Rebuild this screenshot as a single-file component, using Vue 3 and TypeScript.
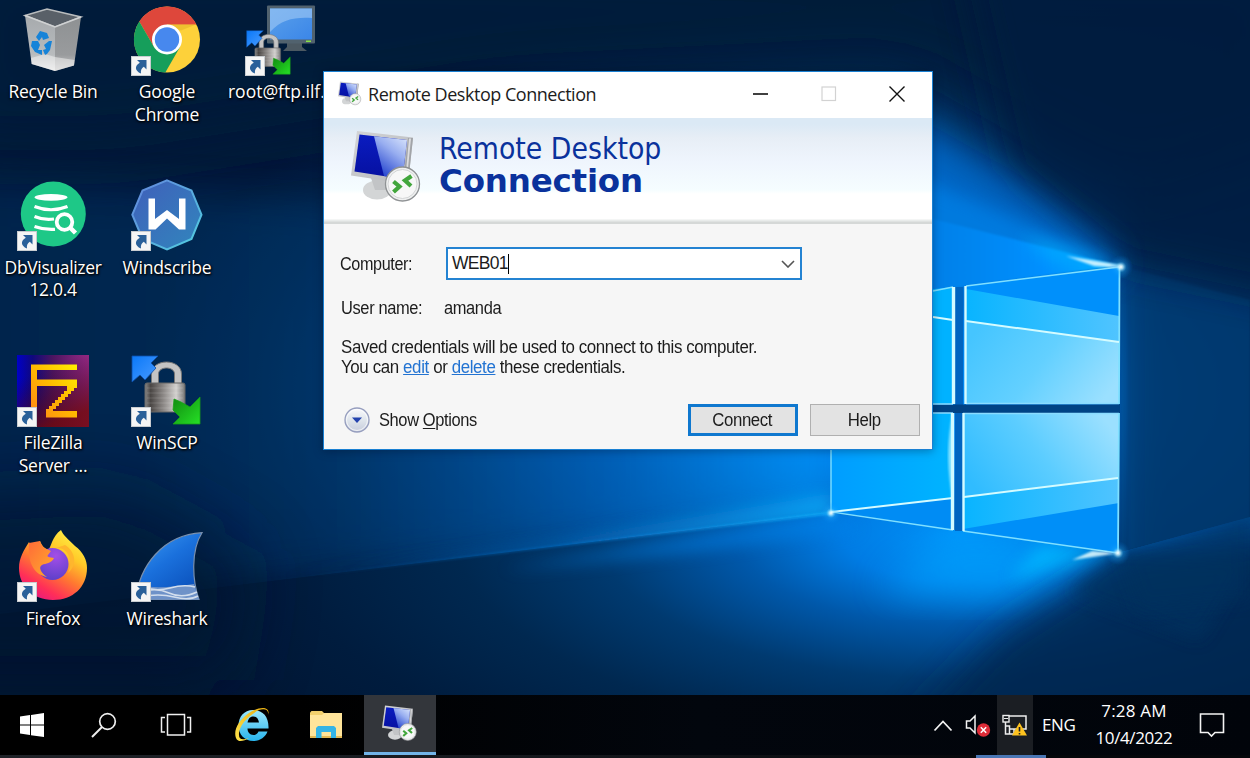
<script setup lang="ts">
import { ref } from 'vue'

interface Shortcut {
  id: string
  lines: string[]
  linked: boolean
}

const shortcuts: Shortcut[] = [
  { id: 'bin', lines: ['Recycle Bin'], linked: false },
  { id: 'dbvis', lines: ['DbVisualizer', '12.0.4'], linked: true },
  { id: 'filezilla', lines: ['FileZilla', 'Server ...'], linked: true },
  { id: 'firefox', lines: ['Firefox'], linked: true },
  { id: 'chrome', lines: ['Google', 'Chrome'], linked: true },
  { id: 'windscribe', lines: ['Windscribe'], linked: true },
  { id: 'winscp', lines: ['WinSCP'], linked: true },
  { id: 'wireshark', lines: ['Wireshark'], linked: true },
  { id: 'ftp', lines: ['root@ftp.ilf...'], linked: true },
]

const computer = ref('WEB01')
const userName = ref('amanda')
</script>

<template>
  <div class="screen">
    <svg class="wallpaper" viewBox="0 0 1250 758" aria-hidden="true">
      <defs>
        <radialGradient id="base" gradientUnits="userSpaceOnUse" cx="0" cy="0" r="1" gradientTransform="translate(900 390) scale(760 400)">
          <stop offset="0" stop-color="#0090fa" />
          <stop offset=".2" stop-color="#007de6" />
          <stop offset=".4" stop-color="#0058a8" />
          <stop offset=".62" stop-color="#003a72" />
          <stop offset=".85" stop-color="#002249" />
          <stop offset="1" stop-color="#001838" />
        </radialGradient>
        <radialGradient id="floor" gradientUnits="userSpaceOnUse" cx="0" cy="0" r="1" gradientTransform="translate(960 535) scale(900 360)">
          <stop offset="0" stop-color="#0092f8" />
          <stop offset=".13" stop-color="#007ce4" />
          <stop offset=".25" stop-color="#0058aa" />
          <stop offset=".4" stop-color="#003a70" />
          <stop offset=".56" stop-color="#002850" />
          <stop offset=".75" stop-color="#001c3e" />
          <stop offset="1" stop-color="#001430" />
        </radialGradient>
        <linearGradient id="leftFade" x1="0" x2="1" y1="0" y2="0">
          <stop offset="0" stop-color="#003566" stop-opacity=".75" />
          <stop offset=".45" stop-color="#00407a" stop-opacity=".8" />
          <stop offset=".75" stop-color="#006acc" stop-opacity=".8" />
          <stop offset="1" stop-color="#009cff" />
        </linearGradient>
        <linearGradient id="rayLine" x1="0" x2="1" y1="0" y2="0">
          <stop offset="0" stop-color="#0a5ca8" stop-opacity="0" />
          <stop offset=".5" stop-color="#0874cc" stop-opacity=".7" />
          <stop offset="1" stop-color="#12b4ff" />
        </linearGradient>
        <linearGradient id="paneTop" x1="0" x2="1" y1=".3" y2=".7">
          <stop offset="0" stop-color="#45c5ff" />
          <stop offset=".5" stop-color="#63d0ff" />
          <stop offset="1" stop-color="#9be0ff" />
        </linearGradient>
        <linearGradient id="paneBottom" x1="0" x2="1" y1=".7" y2=".3">
          <stop offset="0" stop-color="#30bcff" />
          <stop offset=".5" stop-color="#5ccdff" />
          <stop offset="1" stop-color="#9be0ff" />
        </linearGradient>
        <linearGradient id="paneLeft" x1="0" x2="1" y1="0" y2="0">
          <stop offset="0" stop-color="#009dff" />
          <stop offset="1" stop-color="#00b4ff" />
        </linearGradient>
        <linearGradient id="band" x1="0" x2="1" y1="0" y2="0">
          <stop offset="0" stop-color="#08b4ff" />
          <stop offset="1" stop-color="#50c4ff" />
        </linearGradient>
        <linearGradient id="upperGlow" x1="0" x2="1" y1="0" y2="0">
          <stop offset="0" stop-color="#0080e8" />
          <stop offset=".6" stop-color="#0090ff" />
          <stop offset="1" stop-color="#00b0ff" />
        </linearGradient>
        <radialGradient id="spark">
          <stop offset="0" stop-color="#fff" />
          <stop offset=".18" stop-color="#bff0ff" stop-opacity=".8" />
          <stop offset=".45" stop-color="#28b4ff" stop-opacity=".3" />
          <stop offset="1" stop-color="#0088ff" stop-opacity="0" />
        </radialGradient>
        <clipPath id="aboveRay"><path d="M0 0H1250V513H831L0 614Z" /></clipPath>
        <clipPath id="belowRayArea"><path d="M0 614 831 513 963 531 1118 553 1250 517V758H0Z" /></clipPath>
        <filter id="soft2"><feGaussianBlur stdDeviation="1.2" /></filter>
        <filter id="soft8" x="-20%" y="-50%" width="140%" height="200%"><feGaussianBlur stdDeviation="8" /></filter>
        <filter id="soft18" x="-30%" y="-30%" width="160%" height="160%"><feGaussianBlur stdDeviation="18" /></filter>
        <filter id="soft40" x="-40%" y="-40%" width="180%" height="180%"><feGaussianBlur stdDeviation="36" /></filter>
      </defs>
      <rect width="1250" height="758" fill="url(#base)" />
      <path d="M1122 180 1330 60V760H1122Z" fill="#00284f" opacity=".75" filter="url(#soft18)" />
      <path d="M1128 268 1250 300V525L1128 550Z" fill="#00427e" opacity=".5" filter="url(#soft2)" />
      <path d="M-60 -60H1310V130L1130 200 900 70 500 90 120 150-60 150Z" fill="#001a3a" opacity=".85" filter="url(#soft40)" />
      <path d="M1120 262 1300 300V-50H960L1010 170Z" fill="#001f41" opacity=".8" filter="url(#soft18)" />
      <g clip-path="url(#aboveRay)">
        <path d="M-60 180 320 200 830 360V512L-60 618Z" fill="url(#leftFade)" opacity=".55" filter="url(#soft18)" />
        <path d="M250 581 560 540 831 494V516L600 548Z" fill="url(#rayLine)" filter="url(#soft8)" opacity=".7" />
      </g>
      <g clip-path="url(#belowRayArea)">
        <rect y="500" width="1250" height="258" fill="url(#floor)" />
        <path d="M500 570 831 513 860 530 700 550Z" fill="#0083ea" opacity=".6" filter="url(#soft8)" />
        <path d="M1118 550 950 535 880 590 1010 600Z" fill="#00a4ff" opacity=".65" filter="url(#soft18)" />
        <path d="M1118 552 1040 545 1010 580Z" fill="#00b8ff" opacity=".8" filter="url(#soft8)" />
        <path d="M1124 555 1000 634 880 758H1310V530Z" fill="#00264f" opacity=".85" filter="url(#soft18)" />
        <path d="M1119 553 1070 592 1200 640 1250 560Z" fill="#00305e" opacity=".7" filter="url(#soft8)" />
        <path d="M1119 553 1250 517V600L1140 610Z" fill="#00305e" opacity=".5" filter="url(#soft8)" />
      </g>
      <path d="M-90 500 120 490 250 560 230 680H-90Z" fill="#001430" opacity=".75" filter="url(#soft40)" />
      <path d="M300 576 831 511.500V514.500L300 578Z" fill="url(#rayLine)" opacity=".7" filter="url(#soft2)" />
      <path d="M1120 266 900 105 860 220 900 300Z" fill="#006ccf" opacity=".85" filter="url(#soft18)" />
      <path d="M1120 266 900 170V300Z" fill="#0086ee" opacity=".6" filter="url(#soft8)" />
      <path d="M1120 266 933 219V292L966 286Z" fill="url(#upperGlow)" filter="url(#soft2)" />
      <path d="M1120 266 1020 236 1050 258Z" fill="#00b4ff" opacity=".8" filter="url(#soft8)" />

      <path d="M832 300 953 287V404H832Z" fill="#00b2ff" />
      <path d="M966 286 1119 267V404H965Z" fill="#0090fb" />
      <path d="M966 289 1119 316V404H965Z" fill="url(#band)" />
      <path d="M966 321 1119 342V404H965Z" fill="url(#paneTop)" />
      <path d="M831 413H953V530L831 512Z" fill="#008cf4" />
      <path d="M831 413H953V498L831 512Z" fill="url(#paneLeft)" />
      <path d="M963 413H1119V553L963 531Z" fill="#008ff8" />
      <path d="M963 413H1119V503L963 529Z" fill="url(#band)" />
      <path d="M963 413H1119V478L963 497Z" fill="url(#paneBottom)" />
      <path d="M955 287H963V531H955Z" fill="#0064c0" />
      <path d="M831 404.5H1120V413H831Z" fill="#004385" />
      <g fill="none" stroke="#7fe0ff" stroke-width="1.4">
        <path d="M933 291 953 287M966 286 1119 267M831 450V512L953 530M963 531 1118 553" />
        <path d="M966 403.5H1119M963 413.5H1119M933 404H953M933 413H953" stroke="#8adcff" />
        <path d="M1119.500 267 1119 404M1119 413 1118 553" stroke-width="1.8" />
      </g>
      <g fill="none" stroke="#d4fbff" stroke-width="2.4">
        <path d="M953.500 287V404M952.500 413V530" stroke-width="3.4" />
        <path d="M965.500 286V404M963.500 413V531" />
        <path d="M933 317 953 320M966 321 1119 342M831 512 953 498M964 497 1118 478" stroke-width="2" />
      </g>
      <path d="M952 414C947 445 947 465 952 498Z" fill="#bff6ff" opacity=".7" filter="url(#soft2)" />
      <path d="M1121 265 1066 256 1094 266 1121 268ZM1120 553 1072 560 1092 551Z" fill="#e6fcff" opacity=".85" filter="url(#soft2)" />
      <circle cx="1121" cy="267" r="12" fill="url(#spark)" />
      <circle cx="1118" cy="553" r="12" fill="url(#spark)" />
      <circle cx="831" cy="513" r="11" fill="url(#spark)" />
    </svg>

    <!-- reusable artwork -->
    <svg class="defs" width="0" height="0" aria-hidden="true">
      <defs>
        <linearGradient id="rdScreen" x1="0" x2="0" y1="0" y2="1">
          <stop offset="0" stop-color="#0a1cc0" /><stop offset="1" stop-color="#0610a0" />
        </linearGradient>
        <linearGradient id="rdShade" x1=".9" x2=".3" y1="0" y2="1">
          <stop offset="0" stop-color="#d6e2fb" /><stop offset=".4" stop-color="#98aef0" /><stop offset="1" stop-color="#1c3ccc" />
        </linearGradient>
        <linearGradient id="rdFrame" x1="0" x2="1" y1="0" y2="1">
          <stop offset="0" stop-color="#d4d5d7" /><stop offset="1" stop-color="#b4b6ba" />
        </linearGradient>
        <linearGradient id="metal" x1="0" x2="1" y1="0" y2="0">
          <stop offset="0" stop-color="#888" /><stop offset=".14" stop-color="#4a4644" /><stop offset=".45" stop-color="#8a8684" />
          <stop offset=".78" stop-color="#d2d0ce" /><stop offset="1" stop-color="#777" />
        </linearGradient>
        <linearGradient id="blueArrow" x1="0" x2="1" y1="0" y2="1">
          <stop offset="0" stop-color="#0a78f8" /><stop offset="1" stop-color="#4a9cff" />
        </linearGradient>
        <linearGradient id="greenArrow" x1="0" x2="1" y1="0" y2="1">
          <stop offset="0" stop-color="#108a10" /><stop offset="1" stop-color="#26e026" />
        </linearGradient>
        <linearGradient id="monitor" x1="0" x2="1" y1="0" y2="1">
          <stop offset="0" stop-color="#5aa0ea" /><stop offset="1" stop-color="#3b86e8" />
        </linearGradient>
        <linearGradient id="binL" x1="0" x2="0" y1="0" y2="1">
          <stop offset="0" stop-color="#a6aaad" /><stop offset=".7" stop-color="#b8bbbd" /><stop offset="1" stop-color="#f0f0f0" />
        </linearGradient>
        <linearGradient id="binR" x1="0" x2="0" y1="0" y2="1">
          <stop offset="0" stop-color="#8e9193" /><stop offset=".7" stop-color="#999b9d" /><stop offset="1" stop-color="#d2d2d2" />
        </linearGradient>
        <linearGradient id="windFill" x1="0" x2="1" y1="0" y2="1">
          <stop offset="0" stop-color="#405fba" /><stop offset="1" stop-color="#3186bd" />
        </linearGradient>
        <linearGradient id="windEdge" x1="0" x2="1" y1="0" y2="1">
          <stop offset="0" stop-color="#6383dc" /><stop offset="1" stop-color="#50d0e0" />
        </linearGradient>
        <linearGradient id="fzBack" x1="0" x2="1" y1="0" y2="0">
          <stop offset="0" stop-color="#0000c8" /><stop offset=".22" stop-color="#10087c" /><stop offset=".5" stop-color="#4c1560" /><stop offset="1" stop-color="#982a86" />
        </linearGradient>
        <linearGradient id="fzDark" x1="0" x2=".4" y1="0" y2="1">
          <stop offset=".3" stop-color="#300020" stop-opacity="0" /><stop offset="1" stop-color="#700808" stop-opacity=".8" />
        </linearGradient>
        <linearGradient id="fzText" x1="1" x2="0" y1="0" y2="1">
          <stop offset="0" stop-color="#fff000" /><stop offset=".5" stop-color="#ffb800" /><stop offset="1" stop-color="#ff8418" />
        </linearGradient>
        <linearGradient id="foxFlame" x1=".8" x2=".2" y1="0" y2="1">
          <stop offset="0" stop-color="#fff44a" /><stop offset=".3" stop-color="#ffca28" /><stop offset=".55" stop-color="#ff7a30" /><stop offset=".8" stop-color="#ff2e58" /><stop offset="1" stop-color="#e31587" />
        </linearGradient>
        <linearGradient id="foxHead" x1="0" x2="1" y1="0" y2="1">
          <stop offset="0" stop-color="#ff6b38" /><stop offset="1" stop-color="#ffad2c" />
        </linearGradient>
        <radialGradient id="foxGlobe" cx=".6" cy=".25" r=".8">
          <stop offset="0" stop-color="#a34ee8" /><stop offset="1" stop-color="#5a3fc8" />
        </radialGradient>
        <linearGradient id="shark" x1="0" x2=".7" y1="0" y2="1">
          <stop offset="0" stop-color="#3c9cf4" /><stop offset=".5" stop-color="#1a70dc" /><stop offset="1" stop-color="#0a50ba" />
        </linearGradient>
        <linearGradient id="ieBlue" x1="0" x2="0" y1="0" y2="1">
          <stop offset="0" stop-color="#9ce8fc" /><stop offset="1" stop-color="#28b4ec" />
        </linearGradient>
        <linearGradient id="ieGold" x1="0" x2="1" y1="1" y2="0">
          <stop offset="0" stop-color="#ffe24a" /><stop offset="1" stop-color="#e8ae10" />
        </linearGradient>
        <g id="rdIcon">
          <ellipse cx="26" cy="60" rx="14" ry="9.500" fill="#d3d5d6" />
          <path d="M20 48H38L38 60H24Z" fill="#c2c4c6" />
          <path d="M6 1 62 7.500 57 54 0 45.500Z" fill="url(#rdFrame)" />
          <path d="M57 8 62 8 57 54 52 53Z" fill="#a2a4a8" />
          <path d="M58 8.500 60 8.500 55.500 53 54 53Z" fill="#dcdddf" />
          <path d="M8.500 4.500 56 10 51.500 49 3.500 41.500Z" fill="url(#rdScreen)" />
          <path d="M23 6.200 56 10 51.500 49 33 46.100Z" fill="url(#rdShade)" />
          <circle cx="51.500" cy="54" r="17" fill="#eff0f0" stroke="#8f9294" stroke-width="1.300" />
          <circle cx="51.500" cy="54" r="14.500" fill="#f7f7f7" stroke="#d3d5d6" stroke-width="1" />
          <path d="M42.500 51.500 48.500 56.500 42.500 62M60.500 46 54 50.500 60 56" fill="none" stroke="#42a63c" stroke-width="4.200" />
        </g>
        <g id="lock">
          <path d="M20.500 29V19C20.500 3 50.500 3 50.500 19V29H43.500V19C43.500 11 27.500 11 27.500 19V29Z" fill="#c4c4c4" stroke="#777" stroke-width="1" />
          <rect x="14" y="28" width="40" height="29" rx="2" fill="url(#metal)" stroke="#666" />
          <path d="M16 33H52M16 38H52M16 43H52M16 48H52M16 53H52" stroke="#fff" stroke-opacity=".14" />
          <path d="M1 1H27L20 8 25 13 14 25 9 20 1 27Z" fill="url(#blueArrow)" stroke="#0c4ea8" stroke-width=".8" />
          <path d="M69 69H42L49 62 42 55 43 44 50 47 59 52 69 42Z" fill="url(#greenArrow)" stroke="#16a016" stroke-width=".8" />
        </g>
      </defs>
    </svg>

    <div class="desktop">
      <div v-for="item in shortcuts" :key="item.id" class="shortcut">
        <svg class="icon" viewBox="0 0 72 72">
          <g v-if="item.id === 'bin'">
            <path d="M8 11.500 30 5 64 13 38 23Z" fill="#596068" stroke="#b9bcbe" stroke-width="1.500" />
            <path d="M8 11.500 38 23V67L14.700 60Z" fill="url(#binL)" />
            <path d="M38 23 64 13 57 61.500 38 67Z" fill="url(#binR)" />
            <path d="M14.200 54 28 50 38 53 57.500 56 57 61.500 38 67 14.700 60Z" fill="#eee" opacity=".55" />
            <path d="M8 11.500 38 23 64 13" fill="none" stroke="#cfd1d2" stroke-width="1.600" />
            <g fill="#1683d8"><path d="M19 33 23 27 30 29 32 34 26 36 25 33 22 37Z" /><path d="M15 37 21 37 23 41 21 46 25 46V51L18 48 14 42Z" /><path d="M35 37 33 46 30 50 28 51 26 46 29 45 27 41 32 37Z" /></g>
          </g>
          <g v-else-if="item.id === 'chrome'" transform="translate(36 35.500)">
            <circle r="33" fill="#fdd13a" />
            <path d="M29.400 -15H0V0L-13 7.500-27.700-18A33 33 0 0 1 29.400-15Z" fill="#de473b" />
            <path d="M-27.700-18-13 7.500 0 0 13 7.500-1.700 33A33 33 0 0 1-27.700-18Z" fill="#169e5b" />
            <path d="M0-15H29L14-9Z" fill="#d8a820" opacity=".4" />
            <circle r="15" fill="#fff" /><circle r="12.200" fill="#4788ee" />
          </g>
          <g v-else-if="item.id === 'ftp'">
            <path d="M42 38H57V43L62 47H38L42 43Z" fill="#4c5962" />
            <rect x="22" y="1.500" width="48" height="38" rx="1" fill="#51626e" />
            <rect x="25" y="4.500" width="42" height="31" fill="url(#monitor)" />
            <path d="M25 28C37 15 50 13 67 14V4.500H25Z" fill="#9ac4f5" opacity=".65" />
            <rect x="61" y="36.500" width="5" height="1.500" fill="#88e048" />
            <g transform="translate(1 26) scale(.64)"><use href="#lock" /></g>
          </g>
          <g v-else-if="item.id === 'dbvis'">
            <circle cx="36.300" cy="35" r="32.500" fill="#1ec887" />
            <ellipse cx="34" cy="18.300" rx="16.500" ry="3.400" fill="#fff" />
            <g fill="none" stroke="#fff" stroke-width="3.200"><path d="M17.500 27.500Q34 34 50.500 27.500M17.500 37.500Q27 41.500 37 40M17.500 47.500Q27 51 38 50.300" /></g>
            <circle cx="47.500" cy="43" r="7.800" fill="none" stroke="#fff" stroke-width="3.800" /><path d="M53 48.500 58.500 54" stroke="#fff" stroke-width="4.500" />
          </g>
          <g v-else-if="item.id === 'windscribe'">
            <path d="M36 1.300 60.500 11.500 70.500 35.700 60.500 60 36 70.300 11.500 60 1.300 35.700 11.500 11.500Z" fill="url(#windFill)" stroke="url(#windEdge)" stroke-width="2" />
            <path d="M17.500 19.500H24V40L36 31 48 40V19.500H54.500V50.500H48L36 39.500 24.500 50.500H17.500Z" fill="#fff" />
          </g>
          <g v-else-if="item.id === 'filezilla'">
            <rect width="72" height="72" fill="url(#fzBack)" /><rect width="72" height="72" fill="url(#fzDark)" />
            <path d="M14 9.500H60V15H20V24.500H60V33H57V36H54V39H51V42H48V45H45V48H42V51H39V54H36V56H60V62.500H29V54H32V51H35V48H38V45H41V42H44V39H47V36H50V31H20V62H14Z" fill="url(#fzText)" />
          </g>
          <g v-else-if="item.id === 'firefox'">
            <path d="M44 0C46 5 51 9 58 16 66 22 70 30 70 38 70 57 56 70 36 70 16 70 2 56 2 38 2 28 7 20 12 12L15 18 23 11C25 16 27 18 31 20 34 18 35 6 44 0Z" fill="url(#foxFlame)" />
            <circle cx="35.500" cy="34" r="16" fill="url(#foxGlobe)" />
            <path d="M12 13 23 11C25 18 30 19 34 21L31 25C29 27 33 27 37 28 34 34 29 33 25 35 21 37 24 43 30 47 19 45 10 35 12 13Z" fill="url(#foxHead)" />
            <path d="M39 18C51 17 57 31 51 43 62 34 57 20 48 15Z" fill="#ffb62d" />
          </g>
          <g v-else-if="item.id === 'winscp'"><use href="#lock" /></g>
          <g v-else>
            <path d="M71 2.700C60 20 61 50 68 69.500H5C8 37 31 5 71 2.700Z" fill="url(#shark)" stroke="#7990ae" stroke-width="1.200" />
            <path d="M10 55C20 59 44 57 63 54L68 69.500H7Z" fill="#6e92c8" />
            <path d="M12 57Q25 62 39 58T64 57M10 62Q25 57 38 63T66 62M9 67Q28 63 43 67T67 66" fill="none" stroke="#d2deed" stroke-width="1.600" />
          </g>
          <g v-if="item.linked">
            <rect x=".500" y="52.500" width="19" height="19" fill="#f5f5f5" stroke="#c8ccd0" />
            <path d="M6 56H15.500V65.500L12.800 62.800C10.500 64.500 9.500 66.500 10 69.500 3.500 67 3.500 61.500 8.800 58.800Z" fill="#2a6099" />
          </g>
        </svg>
        <div class="label" :class="item.id"><span v-for="line in item.lines" :key="line">{{ line }}</span></div>
      </div>
    </div>

    <section class="dialog">
      <header class="titlebar">
        <svg class="mini" viewBox="0 0 72 74"><use href="#rdIcon" /></svg>
        <span class="title">Remote Desktop Connection</span>
        <div class="controls">
          <svg viewBox="0 0 16 16"><path d="M0 8H15" stroke="#111" stroke-width="1.600" /></svg>
          <svg viewBox="0 0 16 16"><rect x="1" y="1" width="13.500" height="13.500" fill="none" stroke="#d2d2d2" stroke-width="1.200" /></svg>
          <svg viewBox="0 0 16 16"><path d="M.5.500 15.500 15.500M15.500.500.500 15.500" stroke="#111" stroke-width="1.400" /></svg>
        </div>
      </header>
      <div class="banner">
        <svg class="logo" viewBox="0 0 72 74"><use href="#rdIcon" /></svg>
        <div class="heading">
          <span class="h-light">Remote Desktop</span>
          <strong class="h-bold">Connection</strong>
        </div>
      </div>
      <div class="body">
        <div class="row computer">
          <span class="key"><span class="narrow tight">Computer:</span></span>
          <div class="combo">
            <span class="value">{{ computer }}</span><i class="caret"></i>
            <svg class="chev" viewBox="0 0 14 8"><path d="M1 1 7 7 13 1" fill="none" stroke="#555" stroke-width="1.600" /></svg>
          </div>
        </div>
        <div class="row user"><span class="key"><span class="narrow">User name:</span></span><span class="narrow who">{{ userName }}</span></div>
        <div class="note">
          <span>Saved credentials will be used to connect to this computer.</span>
          <span>You can <a>edit</a> or <a>delete</a> these credentials.</span>
        </div>
        <div class="footer">
          <svg class="expander" viewBox="0 0 26 26">
            <defs><linearGradient id="knob" x1="0" x2="0" y1="0" y2="1"><stop offset="0" stop-color="#fafafd" /><stop offset=".5" stop-color="#dfe5ec" /><stop offset="1" stop-color="#c6ccdc" /></linearGradient></defs>
            <circle cx="13" cy="13" r="12" fill="url(#knob)" stroke="#969ebe" stroke-width="1.300" />
            <circle cx="13" cy="13" r="10.500" fill="none" stroke="#fff" stroke-opacity=".7" />
            <path d="M8 10.500H18L13 16Z" fill="#2443ae" />
          </svg>
          <span class="options narrow">Show <u>O</u>ptions</span>
          <button class="btn primary"><span>Connect</span></button>
          <button class="btn"><span>Help</span></button>
        </div>
      </div>
    </section>

    <nav class="taskbar">
      <div class="slot"><svg width="26" height="26" viewBox="0 0 26 26"><path d="M1 4.500 11 3V12.500H1ZM12 2.900 25 1V12.500H12ZM1 13.500H11V23L1 21.500ZM12 13.500H25V25L12 23.200Z" fill="#fff" /></svg></div>
      <div class="slot search"><svg width="26" height="26" viewBox="0 0 26 26"><circle cx="16.500" cy="9.500" r="7.800" fill="none" stroke="#eee" stroke-width="1.700" /><path d="M11 15 1 25" stroke="#eee" stroke-width="2" /></svg></div>
      <div class="slot"><svg width="32" height="24" viewBox="0 0 32 24"><g fill="none" stroke="#f0f0f0" stroke-width="1.500"><path d="M7.500 1.500H24.500V22H7.500ZM5 4.500H1.500V19H5M27 4.500H30.500V19H27" /></g></svg></div>
      <div class="slot ie"><svg width="36" height="36" viewBox="0 0 36 36">
        <path d="M19 3C10 3 4.500 10 4.500 18.500S10 34 19.500 34C26 34 31.500 30 33.500 24.500H24.500C23.500 27 21.500 28 19.500 28 15.500 28 13.500 25 13.500 21.500H34.500C35 10 29 3 19 3ZM13.500 15.500C14.500 11 16.500 9.500 19.500 9.500S24.500 12 25 15.500Z" fill="url(#ieBlue)" />
        <path d="M34 8C37 0 27-2 15 6 5 13-1 23 2 31 4 36 10 34 15 31 9 33 5 33 5 28 4 19 15 8 25 3 31 1 35 3 34 8Z" fill="url(#ieGold)" />
      </svg></div>
      <div class="slot files"><svg width="34" height="30" viewBox="0 0 34 30">
        <path d="M1 2.500 2.500 1H13L15 3V28H1Z" fill="#f2cf6c" /><path d="M1 5H13L15 3H33V28H1Z" fill="#ffe49a" /><path d="M1 26H33V28H1Z" fill="#e2b854" />
        <path d="M7 28V18L9 16H25L27 18V28H22V22H12.500V28Z" fill="#35b4e6" />
      </svg></div>
      <div class="slot active"><svg width="36" height="37" viewBox="0 0 72 74"><use href="#rdIcon" /></svg></div>
      <div class="tray">
        <svg class="up" width="20" height="13" viewBox="0 0 20 13"><path d="M1.500 11.500 10 2.500 18.500 11.500" fill="none" stroke="#f2f2f2" stroke-width="1.800" /></svg>
        <svg class="vol" width="26" height="24" viewBox="0 0 26 24"><path d="M1.500 8H5L10 3V20L5 15H1.500Z" fill="none" stroke="#f4f4f4" stroke-width="1.500" /><circle cx="18.500" cy="17" r="6.700" fill="#de2c38" /><path d="M15.800 14.300 21.200 19.700M21.200 14.300 15.800 19.700" stroke="#fff" stroke-width="1.500" /></svg>
        <div class="net"><svg width="28" height="24" viewBox="0 0 28 24">
          <path d="M8 3H25V16H8M4.500 8V21H8M5 13H8.500V21H17M13 16V20" fill="none" stroke="#eee" stroke-width="1.500" /><rect x="2" y="2.500" width="6" height="6.500" fill="#15181c" stroke="#eee" stroke-width="1.400" /><path d="M3 5.500H7" stroke="#eee" />
          <path d="M18.500 9.500 26 22.500H11Z" fill="#ffc31f" /><path d="M18.500 14V18.500M18.500 20V21.500" stroke="#222" stroke-width="1.600" />
        </svg></div>
        <span class="lang">ENG</span>
        <div class="clock"><span class="time">7:28 AM</span><span>10/4/2022</span></div>
        <svg class="bell" width="26" height="26" viewBox="0 0 26 26"><path d="M1.500 2H24.500V20.500H16L12.500 24 9 20.500H1.500Z" fill="none" stroke="#f4f4f4" stroke-width="1.600" /></svg>
      </div>
    </nav>
    <div class="edge"><i></i></div>
  </div>
</template>

<style>
html,
body {
  margin: 0;
  overflow: hidden;
  background: #001838;
}
</style>

<style scoped>
.screen {
  position: relative;
  width: 1250px;
  height: 758px;
  overflow: hidden;
  display: flex;
  flex-direction: column;
  font-family: 'Open Sans', 'Noto Sans', sans-serif;
  color: #fff;
}
.wallpaper {
  position: absolute;
  inset: 0;
  width: 1250px;
  height: 758px;
}
.defs {
  position: absolute;
}
.desktop {
  position: relative;
  height: 691.5px;
  margin: 3.5px 0 0 -4px;
  display: grid;
  grid-auto-flow: column;
  grid-template-rows: repeat(4, 175.5px);
  grid-auto-columns: 114px;
  flex: none;
}
.shortcut {
  display: flex;
  flex-direction: column;
  align-items: center;
}
.icon {
  width: 72px;
  height: 72px;
  flex: none;
}
.label {
  margin-top: 4.8px;
  display: flex;
  flex-direction: column;
  align-items: center;
  font-size: 17.5px;
  line-height: 22.5px;
  letter-spacing: -0.2px;
  white-space: nowrap;
  text-shadow: 1px 1px 2px #000, 0 1px 3px #000;
}
.label.dbvis {
  letter-spacing: -0.35px;
}
.label.ftp {
  letter-spacing: 0;
}
.dialog {
  position: absolute;
  left: 323px;
  top: 71px;
  width: 610px;
  height: 379px;
  box-sizing: border-box;
  border: 1px solid #1a80d2;
  background: #f6f6f6;
  color: #1c1c1c;
  display: flex;
  flex-direction: column;
  box-shadow: 0 1px 9px rgba(0, 10, 30, 0.35);
}
.titlebar {
  height: 45.5px;
  flex: none;
  background: #fff;
  display: flex;
  align-items: center;
}
.mini {
  width: 24px;
  height: 25px;
  margin: -2px 0 0 14px;
}
.title {
  margin: -1px 0 0 6px;
  font-size: 18px;
  letter-spacing: -0.47px;
  white-space: nowrap;
}
.controls {
  margin-left: auto;
  margin-right: 27px;
  margin-top: -2px;
  display: flex;
  gap: 52px;
}
.controls svg {
  width: 16px;
  height: 16px;
}
.banner {
  height: 106px;
  flex: none;
  box-sizing: border-box;
  display: flex;
  background: linear-gradient(#dbe9f5 0, #dbe9f5 6px, #e7eef6 20px, #eff5fd 44px, #f5fdff 72px, #fff 76px, #fff 101px, #e9eceb 102px, #e9eceb 103px, #d5d8d7 104px, #d5d8d7 106px);
}
.logo {
  width: 72px;
  height: 74px;
  margin: 12px 0 0 27px;
}
.heading {
  margin: 14.5px 0 0 16px;
  display: flex;
  flex-direction: column;
  font-family: 'DejaVu Sans Condensed', 'DejaVu Sans', sans-serif;
  color: #0a329c;
  white-space: nowrap;
  line-height: 33px;
}
.h-light {
  font-size: 29.8px;
  font-stretch: condensed;
}
.h-bold {
  font-family: 'DejaVu Sans', sans-serif;
  font-size: 32.5px;
  letter-spacing: -0.2px;
}
.body {
  flex: 1;
  font-family: 'Liberation Sans', Arial, sans-serif;
  font-size: 17.5px;
  white-space: nowrap;
  padding: 23px 12px 0 16px;
}
.row {
  display: flex;
  align-items: center;
}
.narrow {
  display: inline-block;
  letter-spacing: -0.4px;
  transform: scaleX(0.94);
  transform-origin: left center;
}
.tight {
  transform: scaleX(0.925);
}
.key {
  width: 106px;
}
.computer .key {
  padding-top: 2px;
  box-sizing: border-box;
}
.combo {
  width: 356px;
  height: 33px;
  box-sizing: border-box;
  border: 2px solid #2483d2;
  background: #fff;
  display: flex;
  align-items: center;
  padding: 1px 5px 0 4px;
}
.value {
  letter-spacing: -0.7px;
}
.caret {
  width: 1px;
  height: 20px;
  background: #000;
}
.chev {
  width: 14px;
  height: 8px;
  margin-left: auto;
}
.user {
  margin-top: 17.5px;
  padding-left: 1px;
  height: 22px;
}
.user .key {
  width: 103px;
}
.note {
  display: flex;
  flex-direction: column;
  margin: 18px 0 0 1px;
  line-height: 20px;
  letter-spacing: -0.4px;
  transform: scaleX(0.966);
  transform-origin: left center;
}
.note a {
  color: #2273d2;
  text-decoration: underline;
}
.footer {
  display: flex;
  align-items: center;
  margin-top: 26.5px;
}
.expander {
  width: 26px;
  height: 26px;
  margin-left: 4px;
}
.options {
  margin-left: 9px;
  padding-top: 1px;
}
.options u {
  text-underline-offset: 2px;
}
.btn {
  width: 110px;
  height: 32px;
  box-sizing: border-box;
  margin-left: 12px;
  border: 1.5px solid #b0b0b0;
  background: #e3e3e3;
  font: inherit;
  color: #1c1c1c;
  letter-spacing: -0.4px;
  padding: 1px 2px 0 0;
}
.btn span {
  display: inline-block;
  transform: scaleX(0.96);
}
.primary {
  margin-left: auto;
  border: 3px solid #0f78cf;
}
.taskbar {
  position: relative;
  height: 60px;
  flex: none;
  display: flex;
  background: linear-gradient(90deg, #000 0, #000 300px, #02060d 700px, #01040a 100%);
}
.slot {
  width: 72px;
  flex: none;
  display: flex;
  align-items: center;
  justify-content: center;
  box-sizing: border-box;
}
.slot:first-child {
  width: 63px;
}
.slot.search {
  margin-left: 5px;
}
.slot.ie {
  margin-left: 4px;
}
.slot.files {
  margin-left: 1.5px;
}
.slot.active {
  margin-left: 2px;
  background: #33363b;
  border-bottom: 3px solid #72b4e8;
}
.tray {
  margin-left: auto;
  display: flex;
  align-items: center;
}
.vol {
  margin-left: 12px;
}
.net {
  width: 36px;
  height: 60px;
  margin-left: 6px;
  background: #1b1e23;
  display: flex;
  align-items: center;
  justify-content: center;
}
.lang {
  margin: -2px 0 0 9px;
  width: 36px;
  font-size: 17px;
  letter-spacing: -0.4px;
}
.clock {
  width: 96px;
  margin-left: 8px;
  display: flex;
  flex-direction: column;
  align-items: center;
  line-height: 27px;
  font-size: 17px;
  letter-spacing: -0.4px;
  margin-top: -2px;
  white-space: nowrap;
}
.time {
  letter-spacing: 0.2px;
}
.bell {
  margin: 0 25px 0 17px;
}
.edge {
  position: relative;
  height: 3px;
  flex: none;
  background: linear-gradient(90deg, #202329 0, #14171c 600px, #05070b 1000px);
}
.edge i {
  display: block;
  width: 70px;
  height: 3px;
  margin-left: 976px;
  background: #4a76b4;
}
</style>
